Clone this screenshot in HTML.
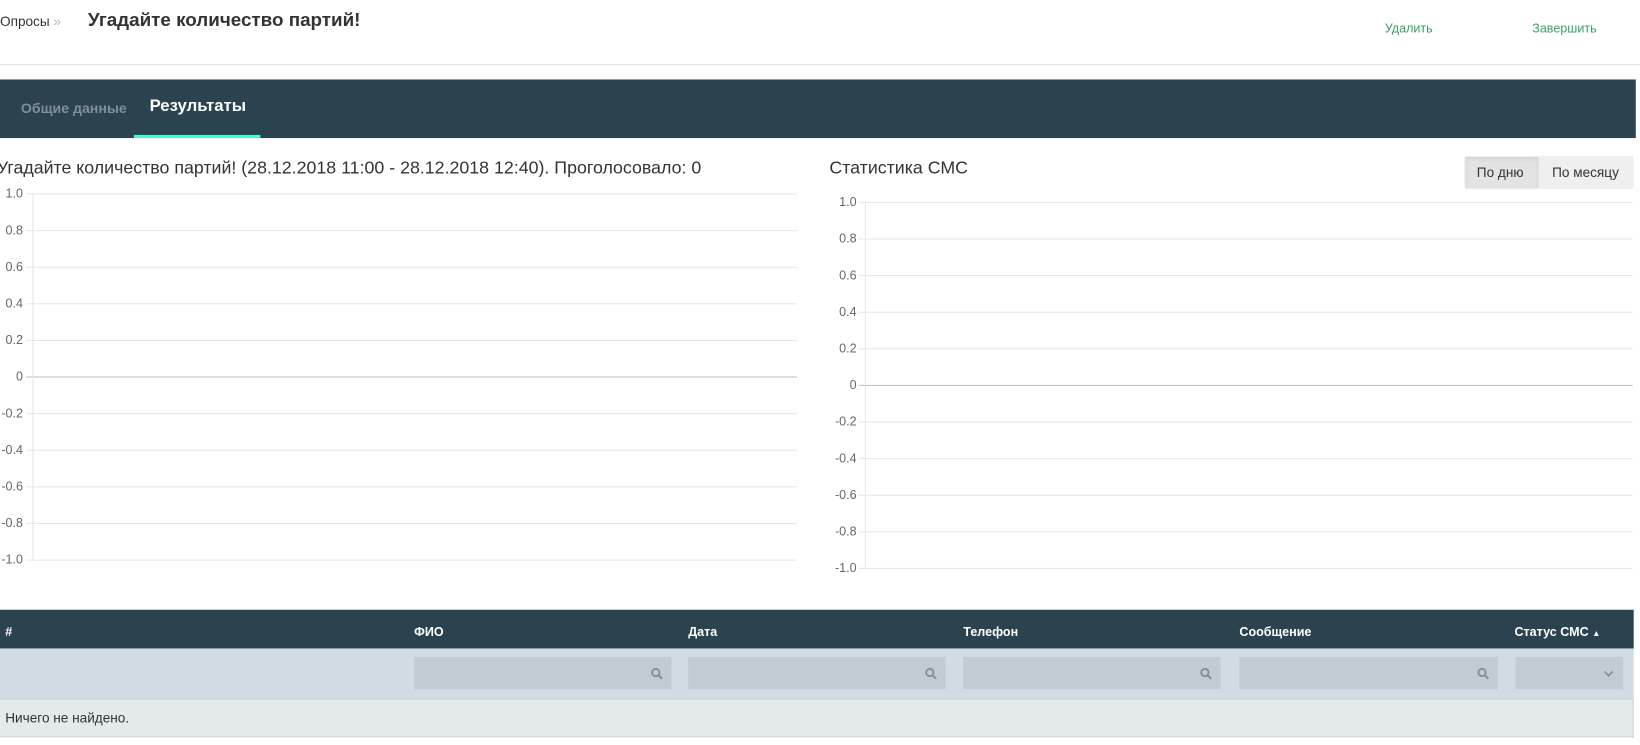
<!DOCTYPE html>
<html><head><meta charset="utf-8"><style>
*{box-sizing:border-box;margin:0;padding:0}
body{width:1640px;height:744px;background:#fff;font-family:"Liberation Sans",sans-serif;position:relative;overflow:hidden;color:#333}
#w{position:absolute;left:0;top:0;width:1568px;height:712px;transform:scale(1.0459);transform-origin:0 0}
.a{position:absolute;white-space:nowrap}
.grid{position:absolute;height:1px;background:#e6e6e6}
.lbl{position:absolute;font-size:12px;color:#666;text-align:right;width:22px}
.th{position:absolute;top:597px;font-size:12px;font-weight:bold;color:#fff}
.inp{position:absolute;top:628px;height:31px;background:#c1ccd2}
.inp svg{position:absolute;right:8px;top:10px}
</style></head><body><div id="w">
<div class="a" style="left:0;top:13px;font-size:13px;color:#333">Опросы <span style="color:#bbb">»</span></div>
<div class="a" style="left:84px;top:9px;font-size:18px;font-weight:bold;color:#333">Угадайте количество партий!</div>
<div class="a" style="left:1324px;top:20px;font-size:12px;color:#3aa06a">Удалить</div>
<div class="a" style="left:1465px;top:20px;font-size:12px;color:#3aa06a">Завершить</div>
<div class="a" style="left:0;top:61px;width:1640px;height:1px;background:#ddd"></div>

<div class="a" style="left:0;top:76px;width:1564px;height:56px;background:#2b434f"></div>
<div class="a" style="left:20px;top:96px;font-size:13.5px;font-weight:bold;color:#7f9098">Общие данные</div>
<div class="a" style="left:143px;top:93px;font-size:16px;font-weight:bold;color:#fff">Результаты</div>
<div class="a" style="left:128px;top:129px;width:121px;height:3px;background:#4ff3d3"></div>

<div class="a" style="left:-3px;top:151px;font-size:17px;color:#333">Угадайте количество партий! (28.12.2018 11:00 - 28.12.2018 12:40). Проголосовало: 0</div>
<div class="a" style="left:793px;top:151px;font-size:17px;color:#333">Статистика СМС</div>
<div class="a" style="left:1400px;top:149px;width:162px;height:32px;background:#efefef;border-radius:3px"></div>
<div class="a" style="left:1401px;top:150px;width:70px;height:30px;background:#e3e3e3;box-shadow:inset 0 2px 4px rgba(0,0,0,.08)"></div>
<div class="a" style="left:1412px;top:157px;font-size:13px;color:#333">По дню</div>
<div class="a" style="left:1484px;top:157px;font-size:13px;color:#333">По месяцу</div>

<div id="c1"></div><div id="c2"></div>

<div class="a" style="left:0;top:583px;width:1562px;height:37px;background:#2b434f"></div>
<div class="th" style="left:5px">#</div>
<div class="th" style="left:396px">ФИО</div>
<div class="th" style="left:658px">Дата</div>
<div class="th" style="left:921px">Телефон</div>
<div class="th" style="left:1185px">Сообщение</div>
<div class="th" style="left:1448px">Статус СМС <span style="font-size:8px">&#9650;</span></div>
<div class="a" style="left:0;top:620px;width:1562px;height:48px;background:#d2dbe1"></div>
<div class="inp" style="left:396px;width:246px"><svg width="12" height="12" viewBox="0 0 12 12"><circle cx="5" cy="5" r="3.5" fill="none" stroke="#7d929c" stroke-width="1.8"/><path d="M7.5 7.5L11 11" stroke="#7d929c" stroke-width="2"/></svg></div>
<div class="inp" style="left:658px;width:246px"><svg width="12" height="12" viewBox="0 0 12 12"><circle cx="5" cy="5" r="3.5" fill="none" stroke="#7d929c" stroke-width="1.8"/><path d="M7.5 7.5L11 11" stroke="#7d929c" stroke-width="2"/></svg></div>
<div class="inp" style="left:921px;width:246px"><svg width="12" height="12" viewBox="0 0 12 12"><circle cx="5" cy="5" r="3.5" fill="none" stroke="#7d929c" stroke-width="1.8"/><path d="M7.5 7.5L11 11" stroke="#7d929c" stroke-width="2"/></svg></div>
<div class="inp" style="left:1185px;width:247px"><svg width="12" height="12" viewBox="0 0 12 12"><circle cx="5" cy="5" r="3.5" fill="none" stroke="#7d929c" stroke-width="1.8"/><path d="M7.5 7.5L11 11" stroke="#7d929c" stroke-width="2"/></svg></div>
<div class="inp" style="left:1449px;width:103px"><svg width="12" height="12" viewBox="0 0 12 12"><path d="M2 4L6 8L10 4" fill="none" stroke="#7d929c" stroke-width="1.6"/></svg></div>
<div class="a" style="left:0;top:668px;width:1562px;height:37px;background:#e4e9ec;border-top:1px solid #cdd5da;border-bottom:1px solid #cdd5da;border-right:1px solid #cdd5da"></div>
<div class="a" style="left:5px;top:679px;font-size:13px;color:#333">Ничего не найдено.</div>
</div>
<script>
function chart(x0,axisX,x1,y0,step){
 var v=['1.0','0.8','0.6','0.4','0.2','0','-0.2','-0.4','-0.6','-0.8','-1.0'],h='';
 for(var i=0;i<11;i++){var y=y0+i*step;
  h+='<div class="grid" style="left:'+(axisX-6)+'px;top:'+y+'px;width:'+(x1-axisX+6)+'px;'+(i==5?'background:#c0c0c0':'')+'"></div>';
  h+='<div class="lbl" style="left:'+(x0)+'px;top:'+(y-7)+'px">'+v[i]+'</div>';}
 h+='<div class="a" style="left:'+axisX+'px;top:'+y0+'px;width:1px;height:'+(step*10)+'px;background:#e6e6e6"></div>';
 return h;}
document.getElementById('c1').innerHTML=chart(0,31,762,185,35);
document.getElementById('c2').innerHTML=chart(797,827,1561,193,35);
</script>
</body></html>
